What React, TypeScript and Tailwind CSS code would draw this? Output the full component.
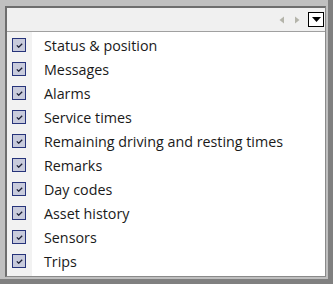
import React from 'react';

const items = [
    'Status & position',
    'Messages',
    'Alarms',
    'Service times',
    'Remaining driving and resting times',
    'Remarks',
    'Day codes',
    'Asset history',
    'Sensors',
    'Trips',
];

const CheckBox: React.FC = () => (
    <div className="w-[14px] h-[14px] border border-[#26337a] bg-[#c8cbdc] flex items-center justify-center">
        <svg width="7" height="5" viewBox="0 0 7 5">
            <path d="M0.8 2.4 L2.7 4.2 L6.2 0.8" stroke="#1b1f36" strokeWidth="1.3" fill="none" />
        </svg>
    </div>
);

const App: React.FC = () => {
    return (
        <div className="w-[333px] h-[284px] bg-[#c0c0c0] border-r-[5px] border-b-[5px] border-[#808080] pl-[5px] pt-[6px] pr-[2px] pb-[2px]" style={{ fontFamily: '"Open Sans", "Noto Sans", sans-serif' }}>
            <div className="h-full flex flex-col border-l-2 border-t-2 border-r border-b border-l-[#6e6e6e] border-t-[#6e6e6e] border-r-[#8a8a8a] border-b-[#8a8a8a] bg-white">
                <div className="h-[24px] bg-[#f0f0f0] border-b border-[#a0a0a0] flex items-center justify-end pr-[1px] gap-[3px]">
                    <svg width="10" height="10" viewBox="0 0 10 10" className="mr-[2px]">
                        <path d="M7 1.5 L2.5 5 L7 8.5 Z" fill="#b4b4aa" />
                    </svg>
                    <svg width="10" height="10" viewBox="0 0 10 10" className="mr-[3px]">
                        <path d="M3 1.5 L7.5 5 L3 8.5 Z" fill="#b4b4aa" />
                    </svg>
                    <div className="w-[16px] h-[15px] border border-black bg-white flex items-center justify-center">
                        <svg width="9" height="5" viewBox="0 0 9 5">
                            <path d="M0 0 L9 0 L4.5 5 Z" fill="#000" />
                        </svg>
                    </div>
                </div>
                <div className="flex-1 flex">
                    <div className="w-[25px] bg-[#f2f2f2] flex flex-col pt-[1px]">
                        {items.map((it) => (
                            <div key={it} className="h-[24px] flex items-center pl-[5px]">
                                <CheckBox />
                            </div>
                        ))}
                    </div>
                    <div className="flex-1 flex flex-col pt-[2px] pl-[12px]">
                        {items.map((it) => (
                            <div key={it} className="h-[24px] flex items-center text-[14.3px] text-[#1a1a1a] whitespace-nowrap">
                                {it}
                            </div>
                        ))}
                    </div>
                </div>
            </div>
        </div>
    );
};

export default App;
